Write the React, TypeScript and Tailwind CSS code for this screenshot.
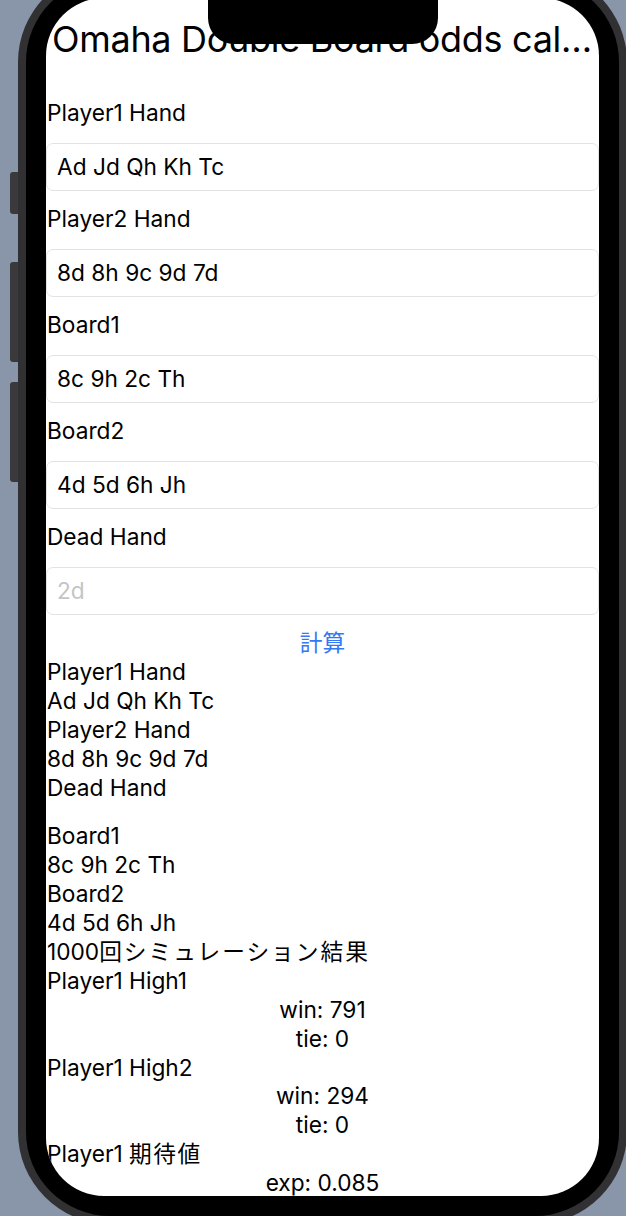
import React from "react";

const FONT = "font-[Inter,'Noto_Sans_CJK_JP',sans-serif]";

function Label({ children }: { children: React.ReactNode }) {
  return <div className="h-[29px] pl-[1px] text-[22.7px] leading-[29px] text-black">{children}</div>;
}

function Field({ value, placeholder }: { value?: string; placeholder?: string }) {
  return (
    <div className="mt-[16px] mb-[13px] flex h-[48px] items-center rounded-[7px] border border-[#e3e3e5] bg-white px-[10px] text-[22.7px]">
      {value ? (
        <span className="text-black">{value}</span>
      ) : (
        <span className="text-[#c5c5c7]">{placeholder}</span>
      )}
    </div>
  );
}

function Line({ children, center }: { children?: React.ReactNode; center?: boolean }) {
  return (
    <div
      className={
        center
          ? "h-[28.9px] text-center text-[22.7px] leading-[29px] text-black whitespace-nowrap"
          : "h-[28.9px] pl-[1px] text-[22.7px] leading-[29px] text-black whitespace-nowrap"
      }
    >
      {children}
    </div>
  );
}

export default function App() {
  return (
    <div className={`relative h-[1216px] w-[626px] overflow-hidden bg-[#8996a9] ${FONT}`}>
      {/* side buttons */}
      <div className="absolute left-[10px] top-[172px] h-[42px] w-[10px] rounded-l-[3px] bg-[#3a3a3c]" />
      <div className="absolute left-[10px] top-[262px] h-[100px] w-[10px] rounded-l-[3px] bg-[#3a3a3c]" />
      <div className="absolute left-[10px] top-[382px] h-[100px] w-[10px] rounded-l-[3px] bg-[#3a3a3c]" />

      {/* phone */}
      <div className="absolute left-[18px] top-[-30px] h-[1254px] w-[609px] rounded-[92px] bg-[#313133] p-[8px]">
        <div className="h-full w-full rounded-[84px] bg-black p-[20px]">
          <div className="relative h-full w-full overflow-hidden rounded-[58px] bg-white">
            {/* content */}
            <div className="flex flex-col pt-[20px]">
              <div className="h-[43px] overflow-hidden text-ellipsis whitespace-nowrap pl-[6px] pr-[2px] text-[36px] leading-[43px] tracking-[-0.3px] text-black">
                Omaha Double Board odds calculator
              </div>
              <div className="mt-[37px] flex flex-col">
                <Label>Player1 Hand</Label>
                <Field value="Ad Jd Qh Kh Tc" />
                <Label>Player2 Hand</Label>
                <Field value="8d 8h 9c 9d 7d" />
                <Label>Board1</Label>
                <Field value="8c 9h 2c Th" />
                <Label>Board2</Label>
                <Field value="4d 5d 6h Jh" />
                <Label>Dead Hand</Label>
                <div className="mt-[16px] flex h-[48px] items-center rounded-[7px] border border-[#e3e3e5] bg-white px-[10px] text-[22.7px]">
                  <span className="text-[#c5c5c7]">2d</span>
                </div>
                <div className="mt-[13px] h-[29px] text-center text-[22.7px] leading-[29px] text-[#3478f6]">計算</div>
                <Line>Player1 Hand</Line>
                <Line>Ad Jd Qh Kh Tc</Line>
                <Line>Player2 Hand</Line>
                <Line>8d 8h 9c 9d 7d</Line>
                <Line>Dead Hand</Line>
                <div className="h-[20px]" />
                <Line>Board1</Line>
                <Line>8c 9h 2c Th</Line>
                <Line>Board2</Line>
                <Line>4d 5d 6h Jh</Line>
                <Line>
                  1000<span className="tracking-[2px]">回シミュレーション結果</span>
                </Line>
                <Line>Player1 High1</Line>
                <Line center>win: 791</Line>
                <Line center>tie: 0</Line>
                <Line>Player1 High2</Line>
                <Line center>win: 294</Line>
                <Line center>tie: 0</Line>
                <Line>
                  Player1 <span className="tracking-[1.5px]">期待値</span>
                </Line>
                <Line center>exp: 0.085</Line>
              </div>
            </div>

            {/* notch */}
            <div className="absolute left-[162px] top-0 h-[46px] w-[230px] rounded-b-[26px] bg-black" />
          </div>
        </div>
      </div>
    </div>
  );
}
